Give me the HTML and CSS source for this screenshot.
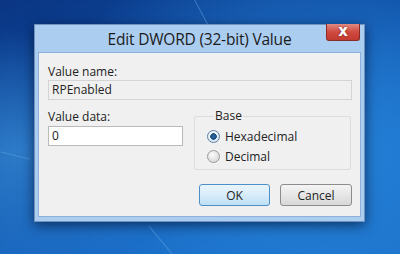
FILE: index.html
```html
<!DOCTYPE html>
<html lang="en">
<head>
    <meta charset="UTF-8">
    <meta name="viewport" content="width=device-width, initial-scale=1.0">
    <title>Edit DWORD (32-bit) Value</title>
    <link rel="stylesheet" href="styles.css">
</head>
<body>

    <div class="desktop">
        <div class="streak streak-top"></div>
        <div class="streak streak-left"></div>
        <div class="streak streak-bottom"></div>

        <div class="window">
            <div class="title-bar">
                <span class="title-text">Edit DWORD (32-bit) Value</span>
                <button class="close-button">x</button>
            </div>

            <div class="client">
                <div class="field-label">Value name:</div>
                <div class="text-field name-field">RPEnabled</div>

                <div class="data-row">
                    <div class="data-column">
                        <div class="field-label">Value data:</div>
                        <div class="text-field data-field">0</div>
                    </div>

                    <fieldset class="group-box">
                        <legend>Base</legend>
                        <div class="radio-row">
                            <span class="radio checked"></span>
                            <span>Hexadecimal</span>
                        </div>
                        <div class="radio-row">
                            <span class="radio"></span>
                            <span>Decimal</span>
                        </div>
                    </fieldset>
                </div>

                <div class="button-row">
                    <button class="dialog-button default-button">OK</button>
                    <button class="dialog-button">Cancel</button>
                </div>
            </div>
        </div>
    </div>

</body>
</html>
```

FILE: styles.css
```css
body {
    margin: 0;
    font-family: "Open Sans", "Noto Sans", sans-serif;
    overflow: hidden;
}

.desktop {
    position: relative;
    width: 400px;
    height: 254px;
    padding: 24px 0 0 34px;
    box-sizing: border-box;
    overflow: hidden;
    background:
        radial-gradient(ellipse 180px 120px at 20px 150px, rgba(70, 160, 230, 0.55), transparent),
        radial-gradient(ellipse 260px 200px at 300px 140px, rgba(40, 135, 220, 0.95), transparent),
        linear-gradient(160deg, #0a3583 0%, #0f4fa6 40%, #1868c2 70%, #1c70c8 100%);
}

/* thin light streaks of the wallpaper */
.streak {
    position: absolute;
    background: rgba(140, 200, 250, 0.35);
    width: 1px;
}

.streak-top {
    left: 200px;
    top: -4px;
    height: 30px;
    transform: rotate(-28deg);
}

.streak-left {
    left: 0;
    top: 155px;
    height: 1px;
    width: 30px;
    transform: rotate(14deg);
}

.streak-bottom {
    left: 160px;
    top: 222px;
    height: 36px;
    transform: rotate(-40deg);
}

.window {
    width: 331px;
    height: 198px;
    box-sizing: border-box;
    background: #abcdf0;
    border: 1px solid #6f93bd;
    box-shadow: 0 3px 12px rgba(0, 10, 40, 0.65);
    padding: 0 3px 4px 3px;
    display: flex;
    flex-direction: column;
}

.title-bar {
    position: relative;
    height: 27px;
    display: flex;
    align-items: center;
    justify-content: center;
    flex-shrink: 0;
}

.title-text {
    font-size: 15.5px;
    color: #1b1b1b;
    letter-spacing: -0.2px;
    margin-top: 1px;
}

.close-button {
    position: absolute;
    top: -1px;
    right: 1px;
    width: 34px;
    height: 17px;
    border: 1px solid #8a2b26;
    border-top: none;
    border-radius: 0 0 3px 3px;
    background: linear-gradient(#e08a82, #cf4a40 50%, #c23a30);
    color: white;
    font-family: "DejaVu Sans", sans-serif;
    font-weight: bold;
    font-size: 15px;
    line-height: 14px;
    padding: 0 0 2px;
    text-shadow: 0 0 2px #7a1d18;
}

.client {
    flex: 1;
    background: #f0f0f0;
    border: 1px solid #8fb0d8;
    padding: 11px 8px 0 9px;
    font-size: 12px;
    color: #222;
}

.field-label {
    line-height: 16px;
    height: 16px;
}

.text-field {
    height: 20px;
    box-sizing: border-box;
    border: 1px solid #d4d4d4;
    padding: 0 3px;
    line-height: 18px;
}

.name-field {
    background: #f0f0f0;
}

.data-row {
    display: grid;
    grid-template-columns: 135px 157px;
    column-gap: 11px;
    margin-top: 9px;
}

.data-field {
    background: white;
    border-color: #b9b9b9;
    margin-top: 1px;
}

.group-box {
    margin: 0;
    padding: 3px 0 6px 12px;
    border: 1px solid #dcdcdc;
    border-radius: 2px;
    height: 61px;
    box-sizing: border-box;
}

.group-box legend {
    padding: 0 1px;
    margin-left: 7px;
    line-height: 14px;
}

.radio-row {
    display: flex;
    align-items: center;
    gap: 5px;
    height: 20px;
}

.radio {
    width: 11px;
    height: 11px;
    border-radius: 50%;
    border: 1px solid #9a9a9a;
    background: radial-gradient(circle at 40% 35%, #fafafa, #d0d0d0);
    box-sizing: content-box;
}

.radio.checked {
    border-color: #5b7fa6;
    background:
        radial-gradient(circle at 50% 50%, #2a6aa0 0, #1c4e7f 3px, transparent 3.5px),
        radial-gradient(circle at 40% 35%, #ffffff, #c9dcec);
}

.button-row {
    display: flex;
    justify-content: flex-end;
    gap: 10px;
    margin-top: 14px;
}

.dialog-button {
    width: 72px;
    height: 22px;
    font-family: inherit;
    font-size: 12px;
    color: #222;
    border: 1px solid #8c8c8c;
    border-radius: 3px;
    background: linear-gradient(#f4f4f4, #e6e6e6 50%, #d8d8d8);
    padding: 0;
}

.default-button {
    width: 71px;
    border-color: #4f8fc8;
    background: linear-gradient(#eaf5fd, #d8ecfa 50%, #bedff6);
}
```
